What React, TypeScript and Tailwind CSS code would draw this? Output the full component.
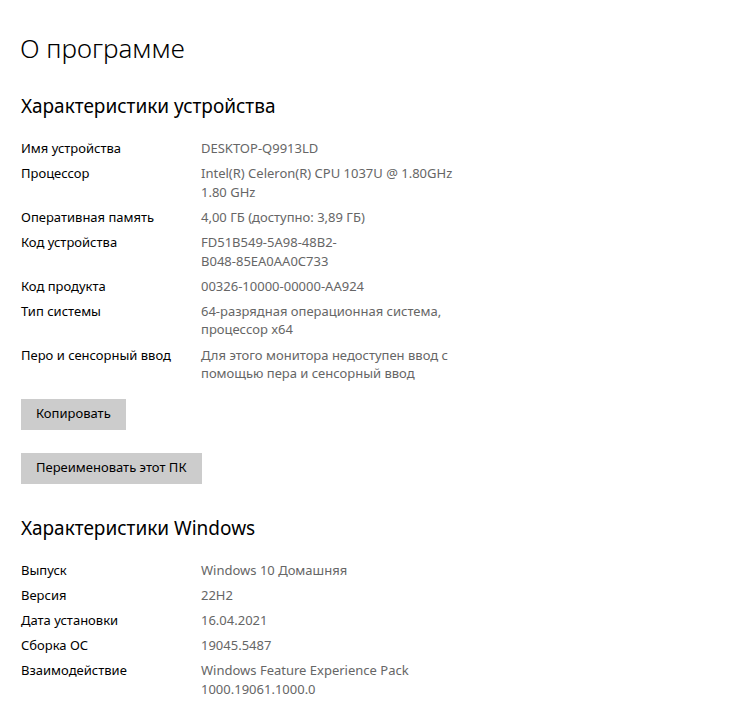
const device: { label: string; value: string[] }[] = [
  { label: "Имя устройства", value: ["DESKTOP-Q9913LD"] },
  { label: "Процессор", value: ["Intel(R) Celeron(R) CPU 1037U @ 1.80GHz", "1.80 GHz"] },
  { label: "Оперативная память", value: ["4,00 ГБ (доступно: 3,89 ГБ)"] },
  { label: "Код устройства", value: ["FD51B549-5A98-48B2-", "B048-85EA0AA0C733"] },
  { label: "Код продукта", value: ["00326-10000-00000-AA924"] },
  { label: "Тип системы", value: ["64-разрядная операционная система,", "процессор x64"] },
  { label: "Перо и сенсорный ввод", value: ["Для этого монитора недоступен ввод с", "помощью пера и сенсорный ввод"] },
];

const windows: { label: string; value: string[] }[] = [
  { label: "Выпуск", value: ["Windows 10 Домашняя"] },
  { label: "Версия", value: ["22H2"] },
  { label: "Дата установки", value: ["16.04.2021"] },
  { label: "Сборка ОС", value: ["19045.5487"] },
  { label: "Взаимодействие", value: ["Windows Feature Experience Pack", "1000.19061.1000.0"] },
];

function InfoTable({ rows }: { rows: { label: string; value: string[] }[] }) {
  return (
    <div className="flex flex-col gap-[6.7px]">
      {rows.map((row) => (
        <div key={row.label} className="flex text-[13px] leading-[18.5px]">
          <div className="w-[180px] shrink-0 text-black">{row.label}</div>
          <div className="text-[#666666]">
            {row.value.map((line) => (
              <div key={line} className="whitespace-nowrap">
                {line}
              </div>
            ))}
          </div>
        </div>
      ))}
    </div>
  );
}

export default function App() {
  return (
    <div
      className="min-h-screen bg-white pl-[21px] pt-[30px] text-black"
      style={{ fontFamily: '"Noto Sans", "Open Sans", sans-serif' }}
    >
      <h1 className="text-[26px] font-light leading-[36px] -ml-[1px]">О программе</h1>

      <h2 className="mt-[26px] text-[19px] leading-[28px]">Характеристики устройства</h2>
      <div className="mt-[19px]">
        <InfoTable rows={device} />
      </div>

      <div className="mt-[16px] flex flex-col items-start gap-[23px]">
        <button className="h-[31px] bg-[#cccccc] px-[15px] text-[13px] text-black">Копировать</button>
        <button className="h-[31px] bg-[#cccccc] px-[15px] text-[13px] text-black">
          Переименовать этот ПК
        </button>
      </div>

      <h2 className="mt-[30px] text-[19px] leading-[28px]">Характеристики Windows</h2>
      <div className="mt-[19px]">
        <InfoTable rows={windows} />
      </div>
    </div>
  );
}
